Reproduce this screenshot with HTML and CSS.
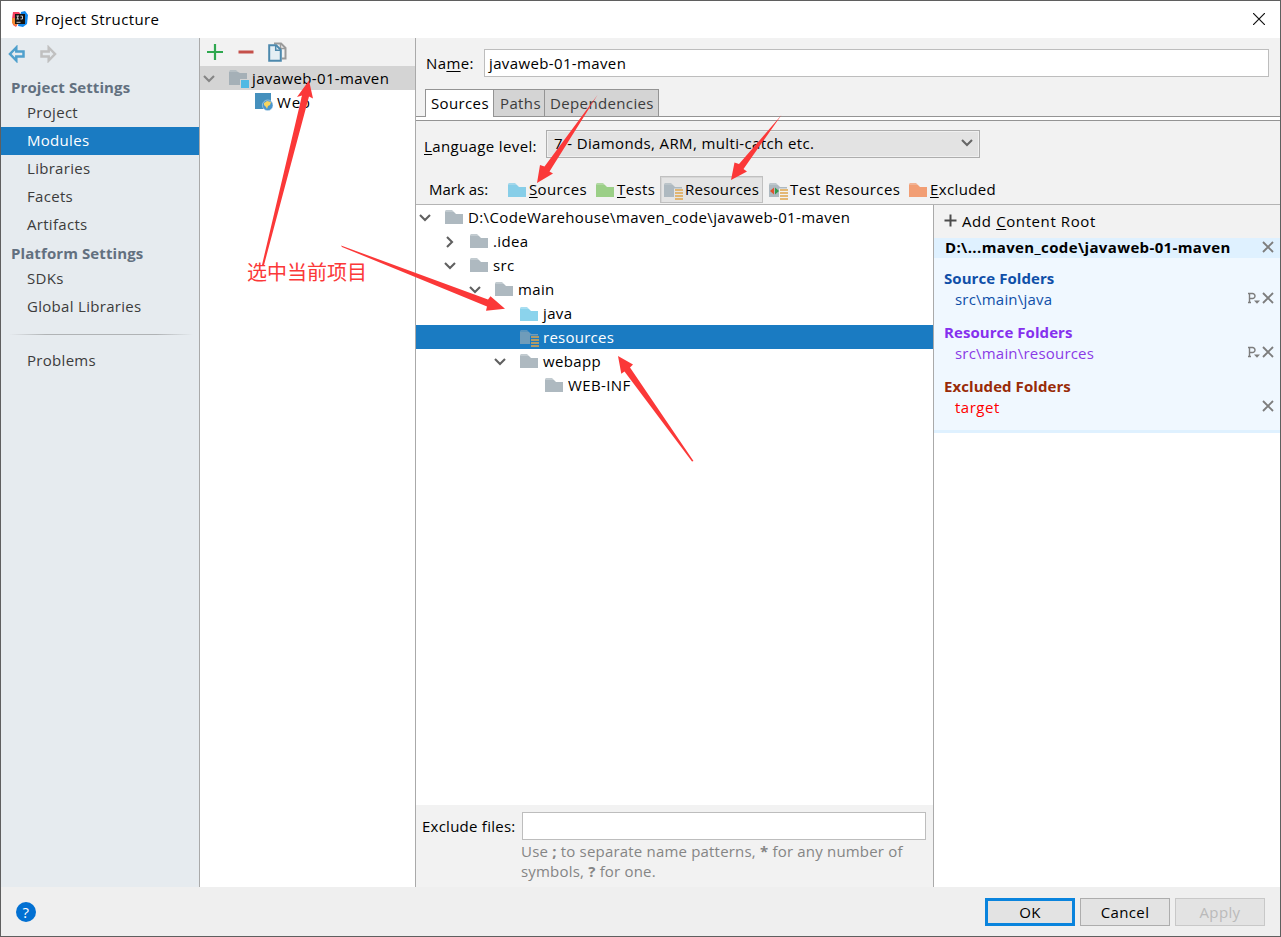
FILE: index.html
```
<!DOCTYPE html>
<html lang="en">
<head>
  <meta charset="UTF-8" />
  <title>Project Structure</title>
  <link rel="stylesheet" href="styles.css">
</head>
<body>
  <svg class="defs" width="0" height="0">
    <symbol id="folder" viewBox="0 0 18 14">
      <path d="M0 2h9l2 2h7v10H0z" fill="currentColor" />
      <path d="M1 0h6l2 2v1H0V1z" fill="currentColor" opacity="0.75" />
    </symbol>
    <symbol id="lines" viewBox="0 0 8 11">
      <path d="M0 1h8M0 4h8M0 7h8M0 10h8" stroke="#dfa54b" stroke-width="1.6" />
    </symbol>
    <symbol id="down" viewBox="0 0 12 8">
      <path d="M1 1l5 5 5-5" fill="none" stroke="currentColor" stroke-width="2.1" />
    </symbol>
    <symbol id="right" viewBox="0 0 8 12">
      <path d="M1 1l5 5-5 5" fill="none" stroke="currentColor" stroke-width="2.1" />
    </symbol>
    <symbol id="cross" viewBox="0 0 12 12">
      <path d="M1 1l10 10M11 1L1 11" fill="none" stroke="#7d7d7d" stroke-width="1.9" />
    </symbol>
    <symbol id="prefix" viewBox="0 0 12 13">
      <path d="M1.5 10.500V1.500h3a2.300 2.300 0 0 1 0 5H1.500M0 1.500h2M0 10.500h3" fill="none" stroke="#7d7d7d" stroke-width="1.400" />
      <path d="M6 8.500h6l-3 3.200z" fill="#7d7d7d" />
    </symbol>
  </svg>

  <div class="window">
    <div class="titlebar">
      <svg class="logo" width="16" height="16" viewBox="0 0 16 16">
        <path d="M1 1l6 0 3 4-6 11-3-2-1-6z" fill="#f5415f" />
        <path d="M0 7l4 0 1 7-2 1-3-3z" fill="#f58a35" />
        <path d="M9 1l4-1 3 4-1 9-4 3-5-1z" fill="#1188ee" />
        <path d="M3 3h10v10H3z" fill="#151515" />
        <path d="M4.500 5h2.500M5.700 5v3M4.500 8h2.500M8.500 5h2v3h-2M4.500 11.300h4" fill="none" stroke="#ddd" stroke-width="0.900" />
      </svg>
      <span class="title">Project Structure</span>
      <svg class="close" width="12" height="12" viewBox="0 0 12 12"><path d="M0 0l12 12M12 0L0 12" stroke="#111" stroke-width="1.200" /></svg>
    </div>

    <div class="content">
      <div class="sidebar">
        <div class="nav">
          <svg width="18" height="18" viewBox="0 0 18 18"><path d="M8.300 2.500L2 9l6.300 6.500V11.500h7.200v-5H8.300z" fill="none" stroke="#4fa0cd" stroke-width="2.500" /></svg>
          <svg width="18" height="18" viewBox="0 0 18 18"><path d="M9.700 2.500L16 9l-6.300 6.500V11.500H2.500v-5h7.200z" fill="none" stroke="#c0c0c0" stroke-width="2.500" /></svg>
        </div>
        <div class="group">Project Settings</div>
        <div class="item">Project</div>
        <div class="item active">Modules</div>
        <div class="item">Libraries</div>
        <div class="item">Facets</div>
        <div class="item">Artifacts</div>
        <div class="group platform">Platform Settings</div>
        <div class="item">SDKs</div>
        <div class="item">Global Libraries</div>
        <div class="divider"></div>
        <div class="item">Problems</div>
      </div>

      <div class="modules">
        <div class="tools">
          <svg width="16" height="16" viewBox="0 0 16 16"><path d="M8 0v16M0 8h16" stroke="#2fa84f" stroke-width="2.200" /></svg>
          <svg width="16" height="16" viewBox="0 0 16 16"><path d="M0.500 8h15" stroke="#c5504a" stroke-width="3" /></svg>
          <svg width="19" height="20" viewBox="0 0 19 20">
            <path d="M6 1.500h7l4.500 4.500v10.500H14" fill="none" stroke="#9a9a9a" stroke-width="2" />
            <path d="M12.500 1v5.500H18" fill="none" stroke="#9a9a9a" stroke-width="1.500" />
            <path d="M1.200 3.200h7l4.600 4.600v11H1.200z" fill="#e4eef4" stroke="#4d89ad" stroke-width="2" />
            <path d="M7.700 3v5.300H13" fill="none" stroke="#4d89ad" stroke-width="1.500" />
          </svg>
        </div>
        <div class="module selected">
          <svg class="chev" width="12" height="8"><use href="#down" /></svg>
          <svg class="mod-icon" width="20" height="18" viewBox="0 0 20 18">
            <path d="M0 2h9l2 1h7v12H0z" fill="#a5b0b7" /><path d="M1 0h6l2 2H0z" fill="#b6bfc4" />
            <path d="M11 9h9v9h-9z" fill="#d4d4d4" /><path d="M12 10h8v8h-8z" fill="#4fb9e3" />
          </svg>
          <span>javaweb-01-maven</span>
        </div>
        <div class="module facet">
          <svg width="18" height="18" viewBox="0 0 18 18">
            <path d="M0 0h16v16H0z" fill="#4590bd" />
            <circle cx="12.700" cy="12.300" r="5.300" fill="#4a96cf" stroke="#c5dded" stroke-width="0.600" />
            <path d="M9 10l3-2 4 1-1 3-2 1-1 3-1-2-2-2z" fill="#f7d560" />
          </svg>
          <span>Web</span>
        </div>
      </div>

      <div class="editor">
        <div class="name-row">
          <label>Na<u>m</u>e:</label>
          <div class="field">javaweb-01-maven</div>
        </div>
        <div class="tabs">
          <div class="tab current">Sources</div>
          <div class="tab paths">Paths</div>
          <div class="tab deps">Dependencies</div>
        </div>
        <div class="tab-line"></div>

        <div class="level-row">
          <label><u>L</u>anguage level:</label>
          <div class="combo"><span>7 - Diamonds, ARM, multi-catch etc.</span><svg width="12" height="8"><use href="#down" /></svg></div>
        </div>

        <div class="mark-row">
          <span class="mark-label">Mark as:</span>
          <div class="mark m-src"><svg class="blue" width="18" height="14"><use href="#folder" /></svg><span><u>S</u>ources</span></div>
          <div class="mark m-test"><svg class="green" width="18" height="14"><use href="#folder" /></svg><span><u>T</u>ests</span></div>
          <div class="mark m-res pressed">
            <svg class="grey wide" width="20" height="17"><use href="#folder" width="18" height="14" /><path d="M10 5.500h10V17H10z" fill="#e4e4e4" /><use href="#lines" x="11" y="6" width="8" height="11" /></svg>
            <span>Resources</span>
          </div>
          <div class="mark m-tres">
            <svg class="grey wide" width="20" height="17"><use href="#folder" width="18" height="14" /><path d="M10 5.500h10V17H10z" fill="#f2f2f2" /><use href="#lines" x="11" y="6" width="8" height="11" /><path d="M1 8l4-3.500v7z" fill="#e0532f" /><path d="M10 8L6 4.500v7z" fill="#339a4b" /></svg>
            <span>Test Resources</span>
          </div>
          <div class="mark m-exc"><svg class="orange" width="18" height="14"><use href="#folder" /></svg><span><u>E</u>xcluded</span></div>
        </div>

        <div class="split">
          <div class="left">
            <div class="tree">
              <div class="node d0"><svg class="arrow" width="12" height="8"><use href="#down" /></svg><svg class="ico" width="18" height="14"><use href="#folder" /></svg><span>D:\CodeWarehouse\maven_code\javaweb-01-maven</span></div>
              <div class="node d1"><svg class="arrow" width="12" height="12"><use href="#right" width="8" x="2" /></svg><svg class="ico" width="18" height="14"><use href="#folder" /></svg><span>.idea</span></div>
              <div class="node d1"><svg class="arrow" width="12" height="8"><use href="#down" /></svg><svg class="ico" width="18" height="14"><use href="#folder" /></svg><span>src</span></div>
              <div class="node d2"><svg class="arrow" width="12" height="8"><use href="#down" /></svg><svg class="ico" width="18" height="14"><use href="#folder" /></svg><span>main</span></div>
              <div class="node d3"><i class="arrow"></i><svg class="ico java" width="18" height="14"><use href="#folder" /></svg><span>java</span></div>
              <div class="node d3 picked"><i class="arrow"></i><svg class="ico res" width="20" height="17"><use href="#folder" width="18" height="14" /><path d="M10 5.500h10V17H10z" fill="#1a7bc2" /><use href="#lines" x="11" y="6" width="8" height="11" /></svg><span>resources</span></div>
              <div class="node d3"><svg class="arrow" width="12" height="8"><use href="#down" /></svg><svg class="ico" width="18" height="14"><use href="#folder" /></svg><span>webapp</span></div>
              <div class="node d4"><i class="arrow"></i><svg class="ico" width="18" height="14"><use href="#folder" /></svg><span>WEB-INF</span></div>
            </div>
            <div class="exclude">
              <label>Exclude files:</label>
              <div>
                <div class="field"></div>
                <p>Use <b>;</b> to separate name patterns, <b>*</b> for any number of<br>symbols, <b>?</b> for one.</p>
              </div>
            </div>
          </div>

          <div class="roots">
            <div class="add"><svg width="13" height="13" viewBox="0 0 13 13"><path d="M6.500 0.500v12M0.500 6.500h12" stroke="#4c4c4c" stroke-width="2" /></svg><span>Add <u>C</u>ontent Root</span></div>
            <div class="root-head"><span>D:\...maven_code\javaweb-01-maven</span><svg width="12" height="12"><use href="#cross" /></svg></div>
            <div class="root-body">
              <h4 class="c-src">Source Folders</h4>
              <div class="path c-src"><span>src\main\java</span><svg width="12" height="13"><use href="#prefix" /></svg><svg width="12" height="12"><use href="#cross" /></svg></div>
              <h4 class="c-res">Resource Folders</h4>
              <div class="path c-res2"><span>src\main\resources</span><svg width="12" height="13"><use href="#prefix" /></svg><svg width="12" height="12"><use href="#cross" /></svg></div>
              <h4 class="c-exc">Excluded Folders</h4>
              <div class="path c-target"><span>target</span><svg width="12" height="12"><use href="#cross" /></svg></div>
            </div>
          </div>
        </div>
      </div>
    </div>

    <div class="footer">
      <div class="help">?</div>
      <div class="btn ok">OK</div>
      <div class="btn">Cancel</div>
      <div class="btn disabled">Apply</div>
    </div>
  </div>

  <!-- hand-drawn notes on top of the dialog -->
  <svg class="notes" width="1281" height="937" viewBox="0 0 1281 937">
    <g fill="#fb3838">
      <path d="M262 265L302 95.500 297 97 309 80.500 313 98.500 309 96.500 264 265z" />
      <path d="M597.500 95L544.500 166.500 540 165 537 183 553 173.500 549.500 171.500z" />
      <path d="M781.500 115L739 164 734.500 162.500 731 180 747 171.500 743.500 169z" />
      <path d="M341 245.500L488 299.500 490.500 296.300 505 308.700 486 310.700 487 306.500 342 247z" />
      <path d="M693.500 461L630 367.500 633 364.500 618 356 621.300 373.700 624.500 371.500 692 461.500z" />
    </g>
  </svg>
  <div class="note-text">选中当前项目</div>
</body>
</html>
```

FILE: styles.css
```
* {
  box-sizing: border-box;
}
body {
  margin: 0;
  font-family: "Open Sans", "Noto Sans", sans-serif;
  font-size: 15px;
  line-height: 20px;
  letter-spacing: 0.37px;
  color: #000;
  white-space: nowrap;
  overflow: hidden;
  position: relative;
}
svg {
  flex: none;
  display: block;
}
u {
  text-underline-offset: 2px;
  text-decoration-thickness: 1px;
}
.defs {
  position: absolute;
}
.window {
  width: 1281px;
  height: 937px;
  border: 1px solid #5f5f5f;
  background: #f2f2f2;
  display: flex;
  flex-direction: column;
}

/* title bar */
.titlebar {
  height: 37px;
  background: #fff;
  display: flex;
  align-items: center;
  padding: 0 15px 1px 11px;
}
.title {
  margin-left: 7px;
  flex: 1;
}

.content {
  display: flex;
  height: 849px;
}

/* sidebar */
.sidebar {
  width: 199px;
  background: #e6ebef;
  border-right: 1px solid #aaa;
  color: #3c3c3c;
}
.nav {
  display: flex;
  gap: 13px;
  height: 38px;
  padding: 7px 0 0 7px;
}
.group {
  height: 23px;
  padding-left: 10px;
  line-height: 23px;
  font-weight: bold;
  letter-spacing: 0.1px;
  color: #62707f;
}
.platform {
  height: 26px;
  line-height: 28px;
}
.item {
  height: 28px;
  line-height: 26px;
  padding-left: 26px;
  letter-spacing: 0.3px;
}
.active {
  background: #1a7bc2;
  color: #fff;
  width: 198px;
}
.divider {
  height: 1px;
  margin: 13px 6px 12px 8px;
  background: linear-gradient(to right, #e6ebef, #b0b3b5 20%, #b0b3b5 80%, #e6ebef);
}

/* module list */
.modules {
  width: 216px;
  background: #fff;
  border-right: 1px solid #aaa;
}
.tools {
  height: 28px;
  background: #f2f2f2;
  display: flex;
  align-items: center;
  gap: 15px;
  padding-left: 7px;
}
.tools svg:last-child {
  margin-left: -1px;
}
.module {
  height: 24px;
  display: flex;
  align-items: center;
}
.selected {
  background: #d4d4d4;
  padding-left: 4px;
}
.chev {
  color: #858585;
  margin: 2px 0 0 -1px;
}
.mod-icon {
  margin: 1px 3px 0 14px;
}
.facet {
  padding-left: 55px;
  gap: 4px;
}
.facet span {
  letter-spacing: 0.8px;
}

/* right side */
.editor {
  flex: 1;
  display: flex;
  flex-direction: column;
}
.field {
  height: 28px;
  background: #fff;
  border: 1px solid #bdbdbd;
  line-height: 26px;
}
.name-row {
  display: flex;
  padding: 11px 11px 0 10px;
  height: 51px;
}
.name-row label {
  width: 58px;
  line-height: 28px;
}
.name-row .field {
  flex: 1;
  padding-left: 4px;
}
.tabs {
  display: flex;
  padding-left: 9px;
  height: 28px;
  background: linear-gradient(#949494, #949494) left bottom / 100% 1px no-repeat;
}
.tab {
  height: 28px;
  border: 1px solid #949494;
  border-left: 0;
  background: #d4d4d4;
  color: #3c3c3c;
  line-height: 27px;
  padding-left: 6px;
}
.tab.current {
  width: 69px;
  background: #fff;
  color: #000;
  border-left: 1px solid #949494;
  border-bottom: 0;
  padding-left: 5px;
}
.paths {
  width: 51px;
}
.deps {
  width: 114px;
  padding-left: 5px;
}
.tab-line {
  height: 4px;
  background: #fff;
  border-bottom: 1px solid #949494;
}
.level-row {
  display: flex;
  padding: 9px 0 0 8px;
  height: 46px;
}
.level-row label {
  width: 122px;
  line-height: 33px;
}
.combo {
  width: 434px;
  height: 28px;
  border: 1px solid #adadad;
  box-shadow: inset 0 0 0 1px #f0f0f0;
  background: #e3e3e3;
  display: flex;
  align-items: center;
  justify-content: space-between;
  padding: 0 6px 2px 7px;
}
.combo svg {
  color: #666;
}
.mark-row {
  display: flex;
  height: 37px;
  padding: 9px 0 0 13px;
}
.mark-label {
  width: 75px;
  line-height: 26px;
  letter-spacing: 0;
}
.mark {
  height: 27px;
  display: flex;
  align-items: center;
  gap: 3px;
  padding-left: 4px;
}
.mark span {
  margin-top: -2px;
}
.mark .wide {
  margin-top: 3px;
  margin-right: -2px;
}
.m-src {
  width: 88px;
}
.m-test {
  width: 68px;
}
.m-res {
  width: 103px;
}
.m-tres {
  width: 142px;
  padding-left: 6px;
}
.pressed {
  border: 1px solid #c0c0c0;
  box-shadow: inset 1px 1px 0 #d6d6d6;
  background: #e4e4e4;
  padding-left: 3px;
  letter-spacing: 0.25px;
}
.blue {
  color: #87cee8;
}
.green {
  color: #9bcf87;
}
.grey {
  color: #aeb9c0;
}
.orange {
  color: #f29e74;
}

.split {
  flex: 1;
  display: flex;
  border-top: 1px solid #b4b4b4;
}
.left {
  width: 518px;
  border-right: 1px solid #aaa;
  display: flex;
  flex-direction: column;
}
.tree {
  flex: 1;
  background: #fff;
}
.node {
  height: 24px;
  display: flex;
  align-items: center;
}
.arrow {
  width: 12px;
  margin: 1px 1px 0 -1px;
  color: #606060;
}
.ico {
  color: #aeb9c0;
  margin: -1px 5px 0 13px;
}
.ico.java {
  color: #8bd3ec;
  margin-top: 1px;
}
.ico.res {
  color: #6f9cba;
  margin-top: 3px;
  margin-right: 3px;
}
.d0 { padding-left: 4px; }
.d1 { padding-left: 29px; }
.d2 { padding-left: 54px; }
.d3 { padding-left: 79px; }
.d4 { padding-left: 104px; }
.picked {
  background: #1a7bc2;
  color: #fff;
  letter-spacing: 0.25px;
}
.exclude {
  height: 82px;
  display: flex;
  padding: 7px 0 0 6px;
}
.exclude label {
  width: 100px;
  line-height: 29px;
  letter-spacing: 0.25px;
}
.exclude .field {
  width: 404px;
}
.exclude p {
  margin: 1px 0 0 -1px;
  color: #858585;
  letter-spacing: 0.19px;
}

/* content roots */
.roots {
  flex: 1;
  background: #fff;
}
.add {
  height: 33px;
  background: #f2f2f2;
  display: flex;
  align-items: center;
  gap: 5px;
  padding: 0 0 2px 10px;
  letter-spacing: 0.6px;
}
.root-head {
  height: 20px;
  background: #dff1ff;
  font-weight: bold;
  line-height: 18px;
  display: flex;
  justify-content: space-between;
  align-items: center;
  padding: 0 6px 2px 11px;
}
.root-body {
  height: 175px;
  background: #f0f8ff;
  border-bottom: 3px solid #dff1ff;
  padding: 10px 6px 0 10px;
}
.root-body h4 {
  margin: 0;
  font-size: 15px;
  height: 21px;
  letter-spacing: 0.07px;
}
.path {
  height: 20px;
  margin-bottom: 13px;
  padding: 0 0 2px 11px;
  display: flex;
  align-items: center;
  gap: 2px;
  letter-spacing: 0.2px;
}
.path span {
  flex: 1;
  margin-top: 2px;
}
.c-src { color: #0f4fa8; }
.c-res { color: #8530ee; }
.c-res2 { color: #8a3be6; }
.c-exc { color: #992b08; }
.c-target {
  color: #f00;
  letter-spacing: 0.5px;
}

/* buttons */
.footer {
  flex: 1;
  background: #efefef;
  display: flex;
  gap: 5px;
  padding: 11px 15px 0 15px;
}
.help {
  width: 20px;
  height: 20px;
  margin: 4px auto 0 0;
  border-radius: 50%;
  background: #0270d2;
  color: #fff;
  text-align: center;
}
.btn {
  width: 90px;
  height: 28px;
  border: 1px solid #adadad;
  background: #e3e3e3;
  text-align: center;
  line-height: 27px;
}
.ok {
  border: 3px solid #0a84dd;
  line-height: 23px;
}
.disabled {
  color: #bababa;
  border-color: #c8c8c8;
}

/* notes */
.notes {
  position: absolute;
  left: 0;
  top: 0;
}
.note-text {
  position: absolute;
  left: 247px;
  top: 258px;
  font-family: "Noto Sans CJK SC", sans-serif;
  font-size: 20px;
  line-height: 28px;
  letter-spacing: 0;
  color: #fb3838;
}
```
